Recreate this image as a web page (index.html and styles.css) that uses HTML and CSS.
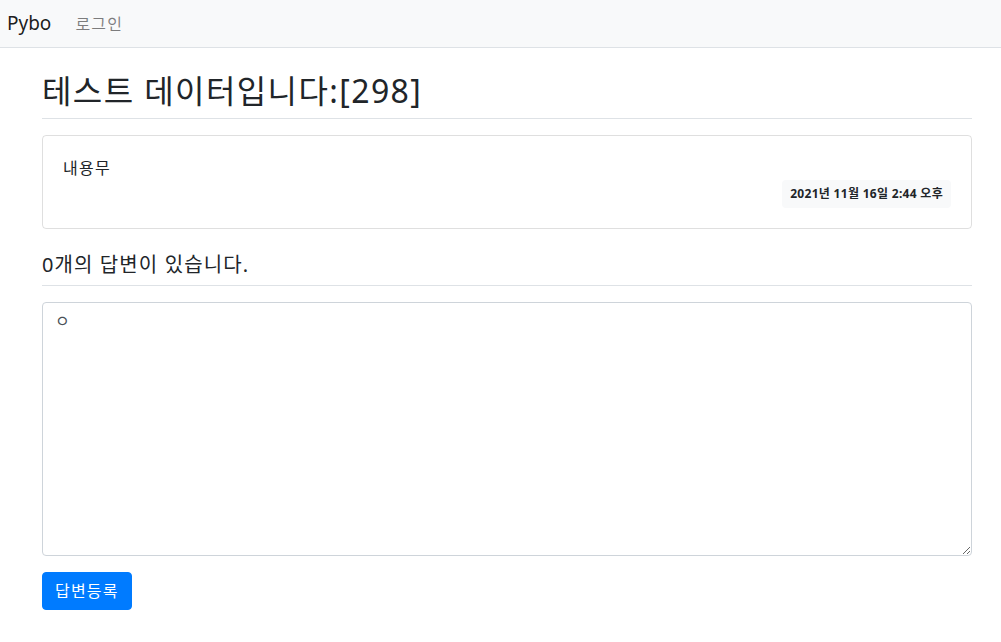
FILE: index.html
```html
<!DOCTYPE html>
<html lang="ko">
<head>
  <meta charset="UTF-8" />
  <title>Pybo</title>
  <meta name="viewport" content="width=device-width, initial-scale=1.0"/>
  <link rel="stylesheet" href="styles.css">
</head>
<body>
  <nav class="navbar">
    <a class="navbar-brand" href="#">Pybo</a>
    <a class="nav-link" href="#">로그인</a>
  </nav>

  <div class="container">
    <h2 class="subject">테스트 데이터입니다:[298]</h2>

    <div class="card">
      <div class="card-body">
        <div class="card-text">내용무</div>
        <div class="card-footer">
          <span class="badge">2021년 11월 16일 2:44 오후</span>
        </div>
      </div>
    </div>

    <h5 class="answer-count">0개의 답변이 있습니다.</h5>

    <form class="answer-form" onsubmit="return false;">
      <div class="form-group">
        <textarea name="content" id="content" class="form-control">ㅇ</textarea>
      </div>
      <button type="submit" class="btn">답변등록</button>
    </form>
  </div>
</body>
</html>
```

FILE: styles.css
```css
body {
  font-family: "Noto Sans", "Noto Sans CJK KR", sans-serif;
  font-size: 16px;
  line-height: 1.5;
  color: #212529;
  background: #fff;
  margin: 0;
}
a {
  text-decoration: none;
}

/* 상단 네비게이션 */
.navbar {
  display: flex;
  align-items: center;
  height: 47px;
  padding: 0 7px;
  background: #f8f9fa;
  border-bottom: 1px solid #dee2e6;
}
.navbar-brand {
  font-size: 19px;
  color: rgba(0,0,0,0.9);
  margin-right: 24px;
  line-height: 1;
}
.nav-link {
  font-size: 16px;
  letter-spacing: 1.2px;
  color: rgba(0,0,0,0.5);
}

.container {
  width: 930px;
  margin: 16px 0 0 42px;
}

.subject {
  font-size: 32px;
  font-weight: 400;
  line-height: 38px;
  letter-spacing: 1.4px;
  margin: 0 0 16px;
  padding: 8px 0;
  border-bottom: 1px solid #dee2e6;
}

.card {
  border: 1px solid rgba(0,0,0,0.125);
  border-radius: 4px;
}
.card-body {
  padding: 20px;
}
.card-text {
  white-space: pre-line;
  line-height: 24px;
  letter-spacing: 1.3px;
}
.card-footer {
  display: flex;
  justify-content: flex-end;
}
.badge {
  display: inline-block;
  background: #f8f9fa;
  color: #212529;
  font-size: 12px;
  font-weight: 700;
  line-height: 12px;
  letter-spacing: 0.3px;
  padding: 8px;
  border-radius: 4px;
}

.answer-count {
  font-size: 20px;
  font-weight: 400;
  line-height: 24px;
  letter-spacing: 1.1px;
  margin: 16px 0 0;
  padding: 8px 0;
  border-bottom: 1px solid #dee2e6;
}

.answer-form {
  margin-top: 16px;
}
.form-group {
  margin-bottom: 16px;
}
.form-control {
  display: block;
  width: 100%;
  height: 254px;
  box-sizing: border-box;
  padding: 6px 12px;
  font-family: inherit;
  font-size: 16px;
  line-height: 1.5;
  color: #495057;
  border: 1px solid #ced4da;
  border-radius: 4px;
  resize: vertical;
}
.btn {
  display: inline-block;
  height: 38px;
  padding: 6px 12px;
  font-family: inherit;
  font-size: 16px;
  line-height: 24px;
  letter-spacing: 1.2px;
  color: #fff;
  background-color: #007bff;
  border: 1px solid #007bff;
  border-radius: 4px;
  cursor: pointer;
}
.btn:hover {
  background-color: #0069d9;
}
```
